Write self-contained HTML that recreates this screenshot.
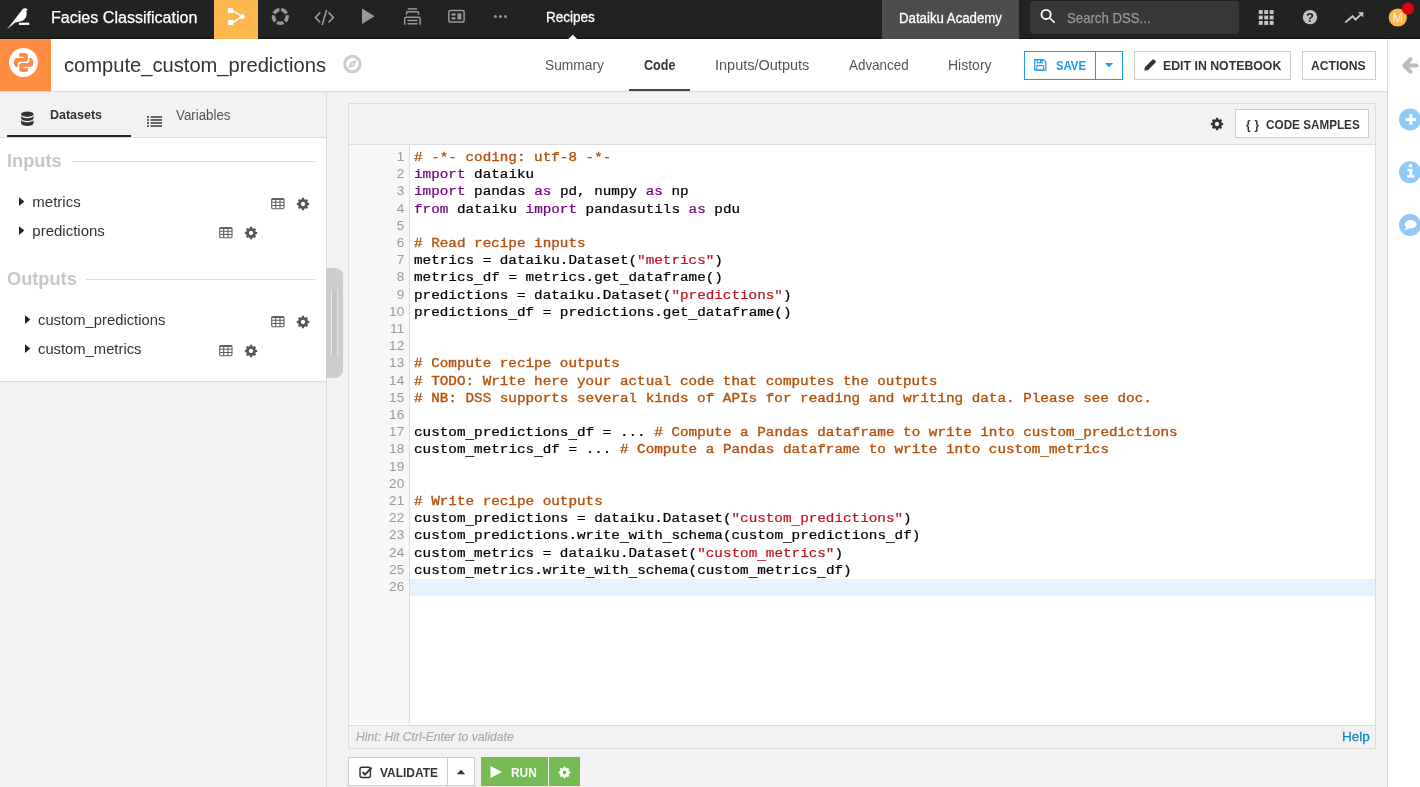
<!DOCTYPE html>
<html>
<head>
<meta charset="utf-8">
<title>compute_custom_predictions</title>
<style>
*{box-sizing:border-box;margin:0;padding:0}
html,body{width:1420px;height:787px;overflow:hidden;background:#f2f2f2;will-change:transform;font-family:"Liberation Sans",sans-serif;color:#333}
.abs{position:absolute}
.t{position:absolute;white-space:nowrap;line-height:1;transform-origin:0 0}
svg{position:absolute;overflow:visible}
/* top nav */
#nav{position:absolute;left:0;top:0;width:1420px;height:39px;background:#222;border-bottom:1px solid #141414}
#nav .t{color:#fff}
#flowtab{position:absolute;left:214px;top:0;width:44px;height:39px;background:#ffb84d}
#acad{position:absolute;left:882px;top:0;width:137px;height:39px;background:#4d4d4d}
#search{position:absolute;left:1030px;top:1px;width:209px;height:33px;background:#383838;border-radius:4px}
/* second bar */
#bar{position:absolute;left:0;top:39px;width:1387px;height:53px;background:#fff;border-bottom:1px solid #ddd}
#rico{position:absolute;left:0;top:39px;width:51px;height:52px;background:#ff8c42}
.btn{position:absolute;background:#fff;border:1px solid #ccc;height:29px;top:51px}
.bt{font-weight:bold;font-size:13px;color:#333}
/* right bar */
#rbar{position:absolute;left:1387px;top:39px;width:33px;height:748px;background:#fff;border-left:1px solid #ddd;overflow:hidden}
/* left */
#ltabs{position:absolute;left:0;top:92px;width:326px;height:46px;background:#f2f2f2;border-bottom:1px solid #ddd}
#lpanel{position:absolute;left:0;top:138px;width:326px;height:244px;background:#fff;border-bottom:1px solid #ddd}
#lborder{position:absolute;left:326px;top:92px;width:1px;height:695px;background:#ddd}
#handle{position:absolute;left:326px;top:267.5px;width:17px;height:110.5px;background:#cdcdcd;border-radius:0 7.5px 7.5px 0}
.hd{font-weight:bold;font-size:17.5px;color:#c6c6c6}
.hl{position:absolute;height:1px;background:#ddd}
.ds{font-size:15px;color:#333}
/* editor */
#ed{position:absolute;left:348px;top:103px;width:1028px;height:646px;border:1px solid #ddd;background:#fff}
#edtb{position:absolute;left:0;top:0;width:1026px;height:41px;background:#f2f2f2;border-bottom:1px solid #ddd}
#gutter{position:absolute;left:0;top:41px;width:61px;height:579px;background:#f7f7f7;border-right:1px solid #ddd}
#edft{position:absolute;left:0;top:621px;width:1026px;height:23px;background:#f2f2f2;border-top:1px solid #ddd}
#active{position:absolute;left:61px;top:475px;width:965px;height:17px;background:#e8f2ff}
.ln{position:absolute;right:4.5px;width:40px;text-align:right;font-size:13.5px;letter-spacing:0.25px;line-height:17px;color:#999;height:17px}
.cl{position:absolute;left:65px;white-space:pre;font-family:"Liberation Mono",monospace;font-size:14.31px;line-height:17px;height:17px;color:#000}
.cl{-webkit-text-stroke:0.25px currentColor;transform:scaleY(0.87);transform-origin:0 12.3px}
.u{position:relative;top:1.6px}
.c{color:#b5500c;-webkit-text-stroke:0.38px #b5500c}.k{color:#770088}.s{color:#be1620}
</style>
</head>
<body>
<!-- ============ TOP NAV ============ -->
<div id="nav">
  <svg style="left:0;top:0" width="60" height="39" viewBox="0 0 60 39"><path fill="#fff" d="M7,29.3 L21.6,10.6 C22.6,8.6 24.4,7.8 26,8.5 L28,9.2 L26.4,10.6 C27,14.5 26.6,18.5 22.6,20.8 L18,22 L15.3,22.6 Z"/><rect x="18.9" y="22.7" width="10.3" height="2.2" fill="#fff"/></svg>
  <div class="t" id="t_proj" style="transform:scaleX(1.004);left:51px;top:10px;font-size:16px;-webkit-text-stroke:0.25px #fff">Facies Classification</div>
  <div id="flowtab"></div>
  <svg style="left:214px;top:0" width="44" height="39" viewBox="214 0 44 39"><g fill="#fff" stroke="#fff"><rect x="228.1" y="8.1" width="5" height="5" stroke="none"/><rect x="228.1" y="20" width="5" height="5" stroke="none"/><circle cx="242.2" cy="16.4" r="2.5" stroke="none"/><path d="M233,10.8 L242.2,16.4 L233,22.3" fill="none" stroke-width="1.4"/></g></svg>
  <svg style="left:268px;top:4px" width="25" height="25" viewBox="268 4 25 25"><path d="M281.25,9.62 A6.85,6.85 0 0 1 286.46,13.40 M287.05,15.21 A6.85,6.85 0 0 1 285.06,21.33 M283.52,22.45 A6.85,6.85 0 0 1 277.08,22.45 M275.54,21.33 A6.85,6.85 0 0 1 273.55,15.21 M274.14,13.40 A6.85,6.85 0 0 1 279.35,9.62" fill="none" stroke="#999" stroke-width="3.4"/></svg>
  <svg style="left:310px;top:0" width="30" height="39" viewBox="310 0 30 39"><g fill="none" stroke="#999" stroke-width="1.6"><path d="M320.3,12.4 L315.4,17.4 L320.3,22.5"/><path d="M326.6,10.1 L322.2,25"/><path d="M328.5,12.4 L333.4,17.4 L328.5,22.5"/></g></svg>
  <svg style="left:360px;top:0" width="20" height="39" viewBox="360 0 20 39"><path fill="#999" d="M362,8.6 L374.6,16.35 L362,24.1 Z"/></svg>
  <svg style="left:400px;top:0" width="25" height="39" viewBox="400 0 25 39"><g fill="none" stroke="#999" stroke-width="1.5"><path d="M407.8,8.9 H417"/><path d="M406.5,14.8 V13 Q406.5,11.8 407.7,11.8 H417.3 Q418.5,11.8 418.5,13 V14.8"/><path d="M404.7,24.8 V18.8 Q404.7,17.3 406.2,17.3 H418.6 Q420.1,17.3 420.1,18.8 V24.8"/><path d="M407.5,20.4 H417.5 M407.5,23.8 H417.5"/></g></svg>
  <svg style="left:445px;top:0" width="25" height="39" viewBox="445 0 25 39"><rect x="448.8" y="10.6" width="15.3" height="11.4" rx="1.8" fill="none" stroke="#999" stroke-width="1.5"/><rect x="451.6" y="13.3" width="3.9" height="2.3" fill="#999"/><rect x="451.6" y="17.2" width="3.9" height="2.3" fill="#999"/><rect x="457.4" y="13.3" width="3.9" height="6.2" fill="#999"/></svg>
  <svg style="left:490px;top:0" width="20" height="39" viewBox="490 0 20 39"><g fill="#999"><circle cx="495.4" cy="16.5" r="1.5"/><circle cx="500.4" cy="16.5" r="1.5"/><circle cx="505.5" cy="16.5" r="1.5"/></g></svg>
  <div class="t" id="t_rec" style="transform:scaleX(0.9);left:546px;top:9px;font-size:15px;-webkit-text-stroke:0.3px #fff">Recipes</div>
  <svg style="left:564px;top:33px" width="18" height="6" viewBox="564 33 18 6"><path d="M568.4,39 L572.8,34.7 L577.2,39 Z" fill="#fff"/></svg>
  <div id="acad"></div>
  <div class="t" id="t_acad" style="transform:scaleX(0.945);left:898.6px;top:10.6px;font-size:14px;-webkit-text-stroke:0.3px #fff">Dataiku Academy</div>
  <div id="search"></div>
  <svg style="left:1036px;top:5px" width="24" height="24" viewBox="1036 5 24 24"><circle cx="1046.1" cy="14.4" r="4.6" fill="none" stroke="#fff" stroke-width="1.8"/><path d="M1049.6,18 L1054.6,22.6" stroke="#fff" stroke-width="1.6" fill="none"/></svg>
  <div class="t" id="t_search" style="transform:scaleX(0.91);left:1067px;top:11px;font-size:14.5px;color:#999;-webkit-text-stroke:0.25px #999">Search DSS...</div>
  <svg style="left:1255px;top:5px" width="24" height="24" viewBox="1255 5 24 24"><g fill="#c6c6c6"><rect x="1258.8" y="10.1" width="3.9" height="3.9"/><rect x="1264.25" y="10.1" width="3.9" height="3.9"/><rect x="1269.7" y="10.1" width="3.9" height="3.9"/><rect x="1258.8" y="15.55" width="3.9" height="3.9"/><rect x="1264.25" y="15.55" width="3.9" height="3.9"/><rect x="1269.7" y="15.55" width="3.9" height="3.9"/><rect x="1258.8" y="21" width="3.9" height="3.9"/><rect x="1264.25" y="21" width="3.9" height="3.9"/><rect x="1269.7" y="21" width="3.9" height="3.9"/></g></svg>
  <svg style="left:1300px;top:7px" width="20" height="20" viewBox="1300 7 20 20"><circle cx="1310" cy="17.1" r="7.2" fill="#c2c2c2"/><text x="1310" y="21.8" font-family="Liberation Sans" font-weight="bold" font-size="13" fill="#222" text-anchor="middle">?</text></svg>
  <svg style="left:1340px;top:7px" width="28" height="20" viewBox="1340 7 28 20"><path d="M1345.2,22.6 L1352.6,16.2 L1355.5,19.6 L1362,13.4" fill="none" stroke="#c2c2c2" stroke-width="1.9"/><path d="M1358,12.2 L1363.4,12 L1363.2,17.4 Z" fill="#c2c2c2"/></svg>
  <svg style="left:1385px;top:0" width="35" height="39" viewBox="1385 0 35 39"><circle cx="1397.8" cy="17.5" r="9.1" fill="#ffb84d"/><text x="1397.8" y="22" font-family="Liberation Sans" font-size="12.5" fill="#fff" fill-opacity="0.85" text-anchor="middle">M</text><circle cx="1408" cy="8.6" r="6.1" fill="#d9000f"/></svg>
</div>

<!-- ============ SECOND BAR ============ -->
<div id="bar"></div>
<div id="rico"></div>
<svg style="left:0;top:39px" width="51" height="52" viewBox="0 39 51 52"><circle cx="23.45" cy="62.55" r="14.45" fill="#fff"/>
<g fill="#ff8c42"><path id="sn" d="M19.0,54.8 Q19.0,52.9 21.2,52.9 H25 Q27.9,52.9 27.9,55.8 V59 Q27.9,61.8 25,61.8 H20.6 Q17.7,61.8 17.7,64.6 V66.9 H16.4 Q13.9,66.4 13.9,62.3 Q13.9,58.0 16.9,58.0 H23.8 V56.7 H19.0 Z"/>
<path transform="rotate(180 23.57 62.43)" d="M19.0,54.8 Q19.0,52.9 21.2,52.9 H25 Q27.9,52.9 27.9,55.8 V59 Q27.9,61.8 25,61.8 H20.6 Q17.7,61.8 17.7,64.6 V66.9 H16.4 Q13.9,66.4 13.9,62.3 Q13.9,58.0 16.9,58.0 H23.8 V56.7 H19.0 Z"/></g></svg>
<div class="t" id="t_title" style="transform:scaleX(1.007);left:64px;top:55px;font-size:20px;color:#333">compute_custom_predictions</div>
<svg style="left:340px;top:52px" width="24" height="24" viewBox="340 52 24 24"><circle cx="352.4" cy="64.1" r="7.75" fill="none" stroke="#ccc" stroke-width="3"/><path d="M348.4,68.1 L350.3,62 L356.4,60.1 L354.5,66.2 Z" fill="#ccc"/><circle cx="352.4" cy="64.1" r="1.1" fill="#fff"/></svg>
<div class="t" id="t_sum" style="transform:scaleX(0.95);left:545px;top:58px;font-size:14.5px;color:#555">Summary</div>
<div class="t" id="t_code" style="transform:scaleX(0.865);left:643.5px;top:58px;font-size:14.5px;color:#333;font-weight:bold">Code</div>
<div class="abs" style="left:629px;top:89px;width:61px;height:2px;background:#444"></div>
<div class="t" id="t_io" style="left:715px;top:58px;font-size:14.5px;color:#555">Inputs/Outputs</div>
<div class="t" id="t_adv" style="transform:scaleX(0.925);left:848.5px;top:58px;font-size:14.5px;color:#555">Advanced</div>
<div class="t" id="t_his" style="transform:scaleX(0.965);left:948px;top:58px;font-size:14.5px;color:#555">History</div>

<div class="btn" style="left:1024px;width:99px;border-color:#1c99f7"></div>
<div class="abs" style="left:1095px;top:51px;width:1px;height:29px;background:#1c99f7"></div>
<svg style="left:1034px;top:58px" width="14" height="14" viewBox="1034 58 14 14"><path d="M1034.7,59.6 H1043.3 L1045.8,62.1 V70.2 H1034.7 Z" fill="none" stroke="#1c99f7" stroke-width="1.2"/><rect x="1037.2" y="59.6" width="5" height="3.2" fill="none" stroke="#1c99f7" stroke-width="1.1"/><rect x="1040" y="60" width="1.6" height="2.4" fill="#1c99f7"/><rect x="1036.8" y="65.6" width="6.9" height="4.6" fill="none" stroke="#1c99f7" stroke-width="1.1"/></svg>
<div class="t bt" id="t_save" style="transform:scaleX(0.87);left:1056px;top:59px;color:#1c99f7">SAVE</div>
<svg style="left:1104px;top:62px" width="10" height="6" viewBox="0 0 10 6"><path d="M0.8,1 H9.2 L5,5.3 Z" fill="#1c99f7"/></svg>

<div class="btn" style="left:1134px;width:157px"></div>
<svg style="left:1143px;top:58px" width="14" height="14" viewBox="1143 58 14 14"><path d="M1144.3,70.6 L1144.9,67.2 L1152.6,59.5 Q1153.3,58.8 1154,59.5 L1155.6,61.1 Q1156.3,61.8 1155.6,62.5 L1147.9,70.2 Z" fill="#333"/></svg>
<div class="t bt" id="t_edit" style="transform:scaleX(0.947);left:1163px;top:59px">EDIT IN NOTEBOOK</div>
<div class="btn" style="left:1302px;width:74px"></div>
<div class="t bt" id="t_act" style="transform:scaleX(0.935);left:1311px;top:59px">ACTIONS</div>

<!-- ============ RIGHT BAR ============ -->
<div id="rbar">
  <svg style="left:0;top:0" width="33" height="748" viewBox="1388 39 33 748">
    <path d="M1416.6,65.5 H1405.5 M1410.6,59.2 L1404.3,65.5 L1410.6,71.8" fill="none" stroke="#bbb" stroke-width="3.9" stroke-linecap="round" stroke-linejoin="round"/>
    <circle cx="1410" cy="119.5" r="11" fill="#90caf9"/><path d="M1410.8,114.3 V124.7 M1405.6,119.5 H1416" stroke="#fff" stroke-width="3.1" fill="none"/>
    <circle cx="1410" cy="172.2" r="11" fill="#90caf9"/><path d="M1408.8,164.3 H1412.2 V167.3 H1408.8 Z M1407.4,168.8 H1412.4 V175.2 H1414.6 V177.6 H1407.2 V175.2 H1409.2 V171 H1407.4 Z" fill="#fff"/>
    <circle cx="1410" cy="225" r="11" fill="#90caf9"/><ellipse cx="1410.6" cy="224.3" rx="5.9" ry="4.3" fill="#fff"/><path d="M1406.2,226 Q1406,229 1404.2,230.2 Q1407.5,230 1409.4,228 Z" fill="#fff"/>
  </svg>
</div>

<!-- ============ LEFT PANEL ============ -->
<div id="ltabs"></div>
<div id="lpanel"></div>
<div id="lborder"></div>
<div id="handle"></div>
<div class="abs" style="left:331px;top:290px;width:6.5px;height:66px;background:#c6c6c6;border-left:1.2px solid #e8e8e8;border-right:1.2px solid #e8e8e8"></div>
<div class="abs" style="left:7px;top:135px;width:124px;height:2px;background:#222"></div>
<svg style="left:20px;top:110px" width="15" height="18" viewBox="20 110 15 18"><g fill="#333"><ellipse cx="27.3" cy="114.2" rx="6.2" ry="2.7"/><path d="M21.1,115.5 v2.8 a6.2,2.7 0 0 0 12.4,0 v-2.8 a6.2,2.7 0 0 1 -12.4,0 z"/><path d="M21.1,119.7 v3.6 a6.2,2.7 0 0 0 12.4,0 v-3.6 a6.2,2.7 0 0 1 -12.4,0 z"/></g></svg>
<div class="t" id="t_dat" style="transform:scaleX(0.925);left:49.8px;top:107.6px;font-size:13.5px;font-weight:bold;color:#333">Datasets</div>
<svg style="left:146px;top:114px" width="18" height="14" viewBox="146 114 18 14"><g fill="#444"><rect x="147" y="116.2" width="2" height="1.6"/><rect x="150.6" y="116.2" width="11.4" height="1.6"/><rect x="147" y="119.2" width="2" height="1.6"/><rect x="150.6" y="119.2" width="11.4" height="1.6"/><rect x="147" y="122.2" width="2" height="1.6"/><rect x="150.6" y="122.2" width="11.4" height="1.6"/><rect x="147" y="125.2" width="2" height="1.6"/><rect x="150.6" y="125.2" width="11.4" height="1.6"/></g></svg>
<div class="t" id="t_var" style="transform:scaleX(0.95);left:176px;top:108px;font-size:14px;color:#555">Variables</div>

<div class="t hd" id="t_in" style="transform:scaleX(1.04);left:7px;top:153px">Inputs</div>
<div class="hl" style="left:72px;top:161px;width:243px"></div>
<div class="t hd" id="t_out" style="transform:scaleX(1.04);left:7px;top:271px">Outputs</div>
<div class="hl" style="left:86px;top:279px;width:229px"></div>

<svg style="left:19px;top:197.0px" width="6" height="10" viewBox="0 0 6 10"><path d="M0,0.2 L5.3,4.6 L0,9 Z" fill="#222"/></svg>
<div class="t ds" id="t_metrics" style="transform:scaleX(1);left:32.3px;top:194.2px">metrics</div>
<svg style="left:271px;top:198px" width="14" height="12" viewBox="0 0 14 12"><g fill="none" stroke="#606060" stroke-width="1.1"><rect x="0.7" y="0.6" width="12.3" height="10.2" rx="1.2"/><path d="M0.7,1.4 H13 M0.7,4.2 H13 M0.7,7.5 H13 M4.7,0.6 V10.8 M9,0.6 V10.8"/></g></svg>
<svg style="left:296.3px;top:197.0px" width="14" height="14" viewBox="-7 -7 14 14"><path fill="#555" fill-rule="evenodd" d="M4.69,-1.24 L6.16,-1.07 L6.16,1.07 L4.69,1.24 L4.19,2.44 L5.11,3.59 L3.59,5.11 L2.44,4.19 L1.24,4.69 L1.07,6.16 L-1.07,6.16 L-1.24,4.69 L-2.44,4.19 L-3.59,5.11 L-5.11,3.59 L-4.19,2.44 L-4.69,1.24 L-6.16,1.07 L-6.16,-1.07 L-4.69,-1.24 L-4.19,-2.44 L-5.11,-3.59 L-3.59,-5.11 L-2.44,-4.19 L-1.24,-4.69 L-1.07,-6.16 L1.07,-6.16 L1.24,-4.69 L2.44,-4.19 L3.59,-5.11 L5.11,-3.59 L4.19,-2.44 Z M2.15,0 A2.15,2.15 0 1 0 -2.15,0 A2.15,2.15 0 1 0 2.15,0 Z"/></svg>
<svg style="left:19px;top:226.0px" width="6" height="10" viewBox="0 0 6 10"><path d="M0,0.2 L5.3,4.6 L0,9 Z" fill="#222"/></svg>
<div class="t ds" id="t_predictions" style="transform:scaleX(1);left:32.3px;top:223.2px">predictions</div>
<svg style="left:219px;top:227px" width="14" height="12" viewBox="0 0 14 12"><g fill="none" stroke="#606060" stroke-width="1.1"><rect x="0.7" y="0.6" width="12.3" height="10.2" rx="1.2"/><path d="M0.7,1.4 H13 M0.7,4.2 H13 M0.7,7.5 H13 M4.7,0.6 V10.8 M9,0.6 V10.8"/></g></svg>
<svg style="left:244.0px;top:226.0px" width="14" height="14" viewBox="-7 -7 14 14"><path fill="#555" fill-rule="evenodd" d="M4.69,-1.24 L6.16,-1.07 L6.16,1.07 L4.69,1.24 L4.19,2.44 L5.11,3.59 L3.59,5.11 L2.44,4.19 L1.24,4.69 L1.07,6.16 L-1.07,6.16 L-1.24,4.69 L-2.44,4.19 L-3.59,5.11 L-5.11,3.59 L-4.19,2.44 L-4.69,1.24 L-6.16,1.07 L-6.16,-1.07 L-4.69,-1.24 L-4.19,-2.44 L-5.11,-3.59 L-3.59,-5.11 L-2.44,-4.19 L-1.24,-4.69 L-1.07,-6.16 L1.07,-6.16 L1.24,-4.69 L2.44,-4.19 L3.59,-5.11 L5.11,-3.59 L4.19,-2.44 Z M2.15,0 A2.15,2.15 0 1 0 -2.15,0 A2.15,2.15 0 1 0 2.15,0 Z"/></svg>
<svg style="left:25px;top:315.0px" width="6" height="10" viewBox="0 0 6 10"><path d="M0,0.2 L5.3,4.6 L0,9 Z" fill="#222"/></svg>
<div class="t ds" id="t_custom_predictions" style="transform:scaleX(0.985);left:37.7px;top:312.2px">custom_predictions</div>
<svg style="left:271px;top:316px" width="14" height="12" viewBox="0 0 14 12"><g fill="none" stroke="#606060" stroke-width="1.1"><rect x="0.7" y="0.6" width="12.3" height="10.2" rx="1.2"/><path d="M0.7,1.4 H13 M0.7,4.2 H13 M0.7,7.5 H13 M4.7,0.6 V10.8 M9,0.6 V10.8"/></g></svg>
<svg style="left:296.3px;top:315.0px" width="14" height="14" viewBox="-7 -7 14 14"><path fill="#555" fill-rule="evenodd" d="M4.69,-1.24 L6.16,-1.07 L6.16,1.07 L4.69,1.24 L4.19,2.44 L5.11,3.59 L3.59,5.11 L2.44,4.19 L1.24,4.69 L1.07,6.16 L-1.07,6.16 L-1.24,4.69 L-2.44,4.19 L-3.59,5.11 L-5.11,3.59 L-4.19,2.44 L-4.69,1.24 L-6.16,1.07 L-6.16,-1.07 L-4.69,-1.24 L-4.19,-2.44 L-5.11,-3.59 L-3.59,-5.11 L-2.44,-4.19 L-1.24,-4.69 L-1.07,-6.16 L1.07,-6.16 L1.24,-4.69 L2.44,-4.19 L3.59,-5.11 L5.11,-3.59 L4.19,-2.44 Z M2.15,0 A2.15,2.15 0 1 0 -2.15,0 A2.15,2.15 0 1 0 2.15,0 Z"/></svg>
<svg style="left:25px;top:344.0px" width="6" height="10" viewBox="0 0 6 10"><path d="M0,0.2 L5.3,4.6 L0,9 Z" fill="#222"/></svg>
<div class="t ds" id="t_custom_metrics" style="transform:scaleX(0.985);left:37.7px;top:341.2px">custom_metrics</div>
<svg style="left:219px;top:345px" width="14" height="12" viewBox="0 0 14 12"><g fill="none" stroke="#606060" stroke-width="1.1"><rect x="0.7" y="0.6" width="12.3" height="10.2" rx="1.2"/><path d="M0.7,1.4 H13 M0.7,4.2 H13 M0.7,7.5 H13 M4.7,0.6 V10.8 M9,0.6 V10.8"/></g></svg>
<svg style="left:244.0px;top:344.0px" width="14" height="14" viewBox="-7 -7 14 14"><path fill="#555" fill-rule="evenodd" d="M4.69,-1.24 L6.16,-1.07 L6.16,1.07 L4.69,1.24 L4.19,2.44 L5.11,3.59 L3.59,5.11 L2.44,4.19 L1.24,4.69 L1.07,6.16 L-1.07,6.16 L-1.24,4.69 L-2.44,4.19 L-3.59,5.11 L-5.11,3.59 L-4.19,2.44 L-4.69,1.24 L-6.16,1.07 L-6.16,-1.07 L-4.69,-1.24 L-4.19,-2.44 L-5.11,-3.59 L-3.59,-5.11 L-2.44,-4.19 L-1.24,-4.69 L-1.07,-6.16 L1.07,-6.16 L1.24,-4.69 L2.44,-4.19 L3.59,-5.11 L5.11,-3.59 L4.19,-2.44 Z M2.15,0 A2.15,2.15 0 1 0 -2.15,0 A2.15,2.15 0 1 0 2.15,0 Z"/></svg>

<!-- ============ EDITOR ============ -->
<div id="ed">
  <div id="edtb"></div>
  <div id="gutter">
<div class="ln" style="top:3.10px">1</div>
<div class="ln" style="top:20.10px">2</div>
<div class="ln" style="top:37.10px">3</div>
<div class="ln" style="top:55.10px">4</div>
<div class="ln" style="top:72.10px">5</div>
<div class="ln" style="top:89.10px">6</div>
<div class="ln" style="top:106.10px">7</div>
<div class="ln" style="top:123.10px">8</div>
<div class="ln" style="top:141.10px">9</div>
<div class="ln" style="top:158.10px">10</div>
<div class="ln" style="top:175.10px">11</div>
<div class="ln" style="top:192.10px">12</div>
<div class="ln" style="top:209.10px">13</div>
<div class="ln" style="top:227.10px">14</div>
<div class="ln" style="top:244.10px">15</div>
<div class="ln" style="top:261.10px">16</div>
<div class="ln" style="top:278.10px">17</div>
<div class="ln" style="top:295.10px">18</div>
<div class="ln" style="top:313.10px">19</div>
<div class="ln" style="top:330.10px">20</div>
<div class="ln" style="top:347.10px">21</div>
<div class="ln" style="top:364.10px">22</div>
<div class="ln" style="top:381.10px">23</div>
<div class="ln" style="top:399.10px">24</div>
<div class="ln" style="top:416.10px">25</div>
<div class="ln" style="top:433.10px">26</div>
  </div>
  <div id="active"></div>
<div class="cl" style="top:45.00px"><span class="c"># -*- coding: utf-8 -*-</span></div>
<div class="cl" style="top:62.00px"><span class="k">import</span> dataiku</div>
<div class="cl" style="top:79.00px"><span class="k">import</span> pandas <span class="k">as</span> pd, numpy <span class="k">as</span> np</div>
<div class="cl" style="top:97.00px"><span class="k">from</span> dataiku <span class="k">import</span> pandasutils <span class="k">as</span> pdu</div>
<div class="cl" style="top:131.00px"><span class="c"># Read recipe inputs</span></div>
<div class="cl" style="top:148.00px">metrics = dataiku.Dataset(<span class="s">&quot;metrics&quot;</span>)</div>
<div class="cl" style="top:165.00px">metrics<span class="u">_</span>df = metrics.get<span class="u">_</span>dataframe()</div>
<div class="cl" style="top:183.00px">predictions = dataiku.Dataset(<span class="s">&quot;predictions&quot;</span>)</div>
<div class="cl" style="top:200.00px">predictions<span class="u">_</span>df = predictions.get<span class="u">_</span>dataframe()</div>
<div class="cl" style="top:251.00px"><span class="c"># Compute recipe outputs</span></div>
<div class="cl" style="top:269.00px"><span class="c"># TODO: Write here your actual code that computes the outputs</span></div>
<div class="cl" style="top:286.00px"><span class="c"># NB: DSS supports several kinds of APIs for reading and writing data. Please see doc.</span></div>
<div class="cl" style="top:320.00px">custom<span class="u">_</span>predictions<span class="u">_</span>df = ... <span class="c"># Compute a Pandas dataframe to write into custom<span class="u">_</span>predictions</span></div>
<div class="cl" style="top:337.00px">custom<span class="u">_</span>metrics<span class="u">_</span>df = ... <span class="c"># Compute a Pandas dataframe to write into custom<span class="u">_</span>metrics</span></div>
<div class="cl" style="top:389.00px"><span class="c"># Write recipe outputs</span></div>
<div class="cl" style="top:406.00px">custom<span class="u">_</span>predictions = dataiku.Dataset(<span class="s">&quot;custom<span class="u">_</span>predictions&quot;</span>)</div>
<div class="cl" style="top:423.00px">custom<span class="u">_</span>predictions.write<span class="u">_</span>with<span class="u">_</span>schema(custom<span class="u">_</span>predictions<span class="u">_</span>df)</div>
<div class="cl" style="top:441.00px">custom<span class="u">_</span>metrics = dataiku.Dataset(<span class="s">&quot;custom<span class="u">_</span>metrics&quot;</span>)</div>
<div class="cl" style="top:458.00px">custom<span class="u">_</span>metrics.write<span class="u">_</span>with<span class="u">_</span>schema(custom<span class="u">_</span>metrics<span class="u">_</span>df)</div>
  <div id="edft"></div>
</div>
<svg style="left:1210px;top:117px" width="14" height="14" viewBox="-7 -7 14 14"><path fill="#333" fill-rule="evenodd" d="M4.69,-1.24 L6.16,-1.07 L6.16,1.07 L4.69,1.24 L4.19,2.44 L5.11,3.59 L3.59,5.11 L2.44,4.19 L1.24,4.69 L1.07,6.16 L-1.07,6.16 L-1.24,4.69 L-2.44,4.19 L-3.59,5.11 L-5.11,3.59 L-4.19,2.44 L-4.69,1.24 L-6.16,1.07 L-6.16,-1.07 L-4.69,-1.24 L-4.19,-2.44 L-5.11,-3.59 L-3.59,-5.11 L-2.44,-4.19 L-1.24,-4.69 L-1.07,-6.16 L1.07,-6.16 L1.24,-4.69 L2.44,-4.19 L3.59,-5.11 L5.11,-3.59 L4.19,-2.44 Z M2.15,0 A2.15,2.15 0 1 0 -2.15,0 A2.15,2.15 0 1 0 2.15,0 Z"/></svg>
<div class="btn" style="left:1235px;top:109px;width:134px;height:29px"></div>
<div class="t bt" id="t_cs" style="transform:scaleX(0.9);left:1245.8px;top:118px"><span style="letter-spacing:4.3px">{}</span>&nbsp;CODE SAMPLES</div>
<div class="t" id="t_hint" style="transform:scaleX(1.015);left:355.5px;top:731px;font-size:12px;font-style:italic;color:#aaa;-webkit-text-stroke:0.2px #aaa">Hint: Hit Ctrl-Enter to validate</div>
<div class="t" id="t_help" style="left:1342px;top:730px;font-size:13.5px;color:#0a8acb;-webkit-text-stroke:0.3px #0a8acb">Help</div>

<!-- ============ BOTTOM BUTTONS ============ -->
<div class="btn" style="left:348px;top:757px;width:100px;height:29px"></div>
<div class="btn" style="left:447px;top:757px;width:28px;height:29px"></div>
<svg style="left:359px;top:765px" width="14" height="14" viewBox="0 0 14 14"><rect x="1" y="2.2" width="10.4" height="10.4" rx="2" fill="none" stroke="#333" stroke-width="1.5"/><path d="M3.6,7 L6,9.6 L12.6,2.6" fill="none" stroke="#333" stroke-width="1.9"/></svg>
<div class="t bt" id="t_val" style="transform:scaleX(0.92);left:380.4px;top:766px">VALIDATE</div>
<svg style="left:456px;top:769px" width="10" height="6" viewBox="0 0 10 6"><path d="M0.8,5.2 H9.2 L5,0.8 Z" fill="#333"/></svg>
<div class="abs" style="left:481px;top:757px;width:67px;height:29px;background:#75ba52"></div>
<div class="abs" style="left:549px;top:757px;width:31px;height:29px;background:#75ba52"></div>
<svg style="left:489px;top:765px" width="14" height="14" viewBox="0 0 14 14"><path d="M1.5,1 L13,7 L1.5,13 Z" fill="#fff"/></svg>
<div class="t bt" id="t_run" style="transform:scaleX(0.915);left:511px;top:766px;color:#fff">RUN</div>
<svg style="left:558px;top:766px" width="13" height="13" viewBox="-7 -7 14 14"><path fill="#fff" fill-rule="evenodd" d="M4.69,-1.24 L6.16,-1.07 L6.16,1.07 L4.69,1.24 L4.19,2.44 L5.11,3.59 L3.59,5.11 L2.44,4.19 L1.24,4.69 L1.07,6.16 L-1.07,6.16 L-1.24,4.69 L-2.44,4.19 L-3.59,5.11 L-5.11,3.59 L-4.19,2.44 L-4.69,1.24 L-6.16,1.07 L-6.16,-1.07 L-4.69,-1.24 L-4.19,-2.44 L-5.11,-3.59 L-3.59,-5.11 L-2.44,-4.19 L-1.24,-4.69 L-1.07,-6.16 L1.07,-6.16 L1.24,-4.69 L2.44,-4.19 L3.59,-5.11 L5.11,-3.59 L4.19,-2.44 Z M2.15,0 A2.15,2.15 0 1 0 -2.15,0 A2.15,2.15 0 1 0 2.15,0 Z"/></svg>
</body>
</html>
